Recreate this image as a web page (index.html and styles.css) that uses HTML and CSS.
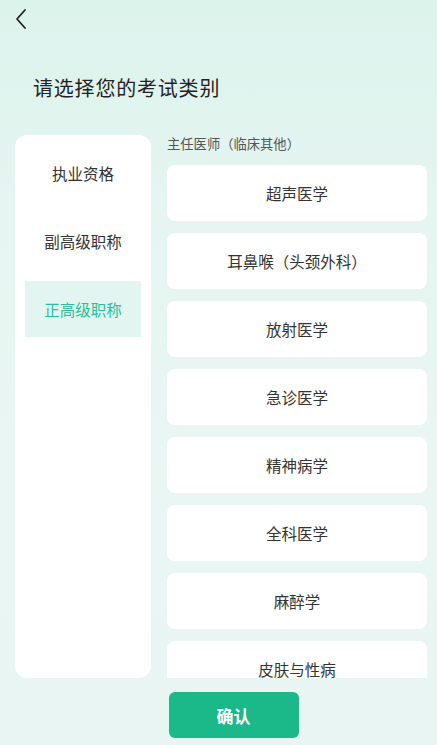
FILE: index.html
```html
<!DOCTYPE html>
<html lang="zh">
<head>
<meta charset="utf-8">
<link rel="stylesheet" href="styles.css">
</head>
<body>
<div class="page">
  <header class="top">
    <svg class="back" width="14" height="22" viewBox="0 0 14 22"><path d="M11 2 L3 11 L11 20" fill="none" stroke="#222" stroke-width="1.8" stroke-linecap="round" stroke-linejoin="round"/></svg>
  </header>
  <h1 class="title">请选择您的考试类别</h1>
  <div class="main">
    <nav class="side">
      <div class="side-item">执业资格</div>
      <div class="side-item">副高级职称</div>
      <div class="side-item active">正高级职称</div>
    </nav>
    <section class="right">
      <div class="sub">主任医师（临床其他）</div>
      <div class="list">
        <div class="card">超声医学</div>
        <div class="card">耳鼻喉（头颈外科）</div>
        <div class="card">放射医学</div>
        <div class="card">急诊医学</div>
        <div class="card">精神病学</div>
        <div class="card">全科医学</div>
        <div class="card">麻醉学</div>
        <div class="card">皮肤与性病</div>
      </div>
    </section>
  </div>
  <div class="footer">
    <button class="confirm">确认</button>
  </div>
</div>
</body>
</html>
```
FILE: styles.css
```css
* { box-sizing: border-box; }
html, body { margin: 0; padding: 0; }
body {
  font-family: "Noto Sans CJK SC", "Noto Sans", sans-serif;
  background: linear-gradient(180deg, #dcf3ec 0%, #e6f5f1 30%, #eaf6f3 70%, #e9f5f2 100%);
  width: 437px;
  height: 745px;
  overflow: hidden;
}
.page {
  width: 437px;
  height: 745px;
  display: flex;
  flex-direction: column;
}
.top {
  height: 38px;
  padding: 8px 0 0 14px;
}
.back { display: block; }
.title {
  margin: 36px 0 0 33px;
  font-size: 20px;
  font-weight: 400;
  line-height: 28px;
  color: #222;
  letter-spacing: 0.8px;
}
.main {
  display: flex;
  margin-top: 33px;
  height: 543px;
  padding: 0 10px 0 15px;
  gap: 16px;
}
.side {
  width: 136px;
  height: 543px;
  background: #fff;
  border-radius: 12px;
  padding: 10px 10px;
  display: flex;
  flex-direction: column;
  gap: 12px;
}
.side-item {
  height: 56px;
  display: flex;
  align-items: center;
  justify-content: center;
  font-size: 15.5px;
  color: #333;
}
.side-item.active {
  background: #e3f5f0;
  color: #2cbf99;
}
.right {
  flex: 1;
  display: flex;
  flex-direction: column;
  min-width: 0;
}
.sub {
  font-size: 13.3px;
  color: #555;
  line-height: 18px;
  height: 30px;
}
.list {
  flex: 1;
  overflow: hidden;
  display: flex;
  flex-direction: column;
  gap: 12px;
}
.card {
  flex: none;
  height: 56px;
  background: #fff;
  border-radius: 8px;
  display: flex;
  align-items: center;
  justify-content: center;
  font-size: 15.5px;
  color: #333;
}
.footer {
  display: flex;
  justify-content: center;
  padding-top: 14px;
}
.confirm {
  width: 130px;
  height: 46px;
  border: none;
  border-radius: 6px;
  background: #1bb98a;
  color: #fff;
  font-family: "Noto Sans CJK SC", sans-serif;
  font-size: 17px;
  font-weight: 700;
  position: relative;
  left: 15px;
}
```
